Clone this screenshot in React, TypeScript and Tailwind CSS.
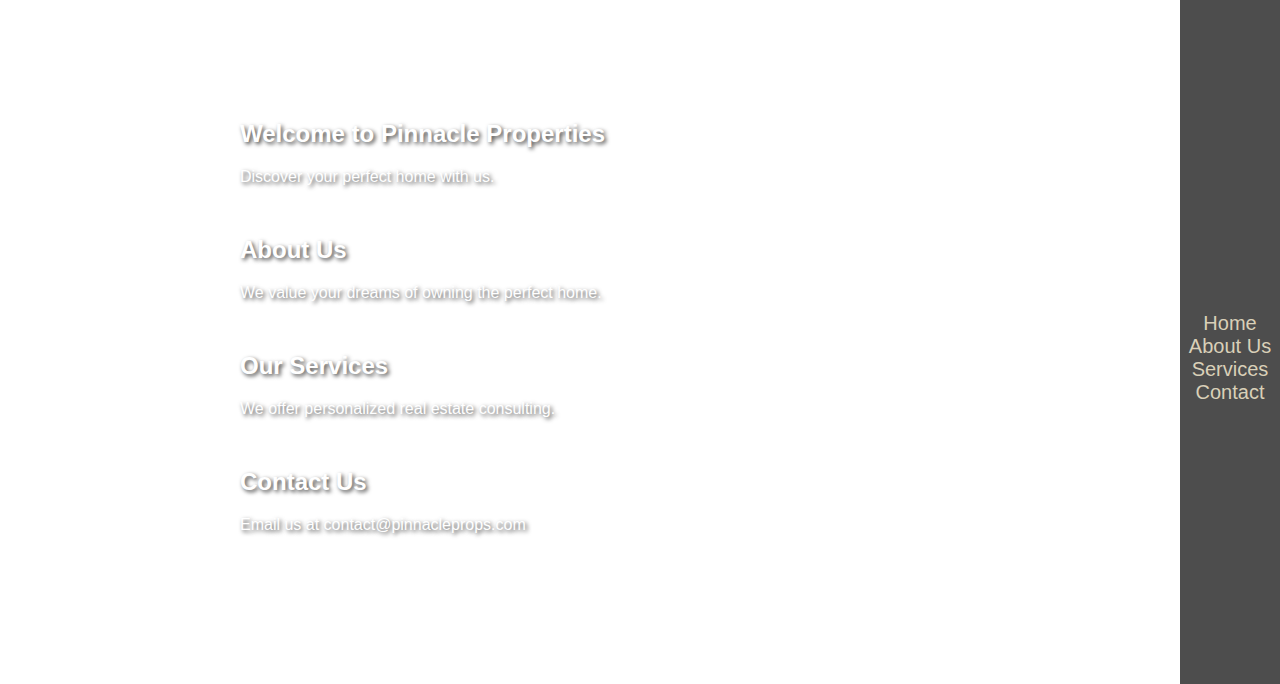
const SECTIONS = [
  { title: 'Welcome to Pinnacle Properties', body: 'Discover your perfect home with us.' },
  { title: 'About Us', body: 'We value your dreams of owning the perfect home.' },
  { title: 'Our Services', body: 'We offer personalized real estate consulting.' },
  { title: 'Contact Us', body: 'Email us at contact@pinnacleprops.com' },
];

const NAV = ['Home', 'About Us', 'Services', 'Contact'];

const SHADOW = '[text-shadow:2px_2px_4px_rgba(0,0,0,0.75)]';

export default function App() {
  return (
    <div className="flex h-[684px] w-full bg-white font-['Liberation_Sans',Arial,sans-serif]">
      <main className="flex-1">
        <div className="mx-auto w-[700px] pt-[120px] flex flex-col gap-[50px]">
          {SECTIONS.map((s) => (
            <section key={s.title} className="flex flex-col gap-[20px]">
              <h2 className={`text-[24px] leading-[28px] font-bold text-white ${SHADOW}`}>{s.title}</h2>
              <p className={`text-[16px] leading-[18px] text-white ${SHADOW}`}>{s.body}</p>
            </section>
          ))}
        </div>
      </main>
      <nav className="w-[100px] h-full bg-[#4d4d4d] flex flex-col items-center justify-center pt-[31px] text-[20px] leading-[23px] text-[#d9d0b8]">
        {NAV.map((item) => (
          <a key={item} href="#" className="text-center">
            {item}
          </a>
        ))}
      </nav>
    </div>
  );
}
